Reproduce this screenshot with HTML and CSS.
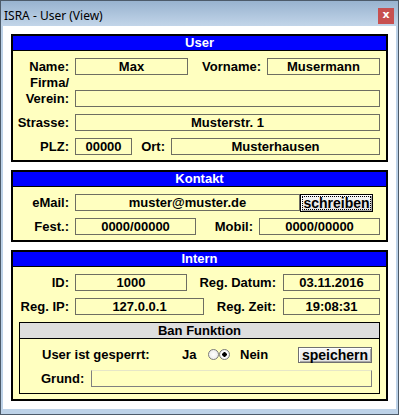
FILE: index.html
```html
<!DOCTYPE html>
<html>
<head>
<title>ISRA - User (View)</title>
<link rel="stylesheet" href="styles.css">
</head>
<body>
<div class="window">
<div class="titlebar">
	<span class="title">ISRA - User (View)</span>
	<span class="close">x</span>
</div>
<div class="client">

<div class="section">
	<div class="head">User</div>
	<div class="body">
		<div class="row">
			<label class="lbl">Name:</label>
			<input class="field w-name" type="text" value="Max" readonly>
			<label class="lbl2 w-vorname">Vorname:</label>
			<input class="field grow" type="text" value="Musermann" readonly>
		</div>
		<div class="row tall">
			<label class="lbl">Firma/<br>Verein:</label>
			<input class="field grow" type="text" value="" readonly>
		</div>
		<div class="row">
			<label class="lbl">Strasse:</label>
			<input class="field grow" type="text" value="Musterstr. 1" readonly>
		</div>
		<div class="row">
			<label class="lbl">PLZ:</label>
			<input class="field w-plz" type="text" value="00000" readonly>
			<label class="lbl2 w-ort">Ort:</label>
			<input class="field grow" type="text" value="Musterhausen" readonly>
		</div>
	</div>
</div>

<div class="section">
	<div class="head">Kontakt</div>
	<div class="body">
		<div class="row">
			<label class="lbl">eMail:</label>
			<input class="field w-mail" type="text" value="muster@muster.de" readonly>
			<button class="btn default w-write"><span>schreiben</span></button>
		</div>
		<div class="row">
			<label class="lbl">Fest.:</label>
			<input class="field w-fest" type="text" value="0000/00000" readonly>
			<label class="lbl2 w-mobil">Mobil:</label>
			<input class="field grow" type="text" value="0000/00000" readonly>
		</div>
	</div>
</div>

<div class="section">
	<div class="head">Intern</div>
	<div class="body">
		<div class="row">
			<label class="lbl">ID:</label>
			<input class="field w-id" type="text" value="1000" readonly>
			<label class="lbl2 w-datum">Reg. Datum:</label>
			<input class="field grow" type="text" value="03.11.2016" readonly>
		</div>
		<div class="row">
			<label class="lbl">Reg. IP:</label>
			<input class="field w-ip" type="text" value="127.0.0.1" readonly>
			<label class="lbl2 w-zeit">Reg. Zeit:</label>
			<input class="field grow" type="text" value="19:08:31" readonly>
		</div>

		<div class="ban">
			<div class="banhead">Ban Funktion</div>
			<div class="banbody">
				<div class="row">
					<span class="banlbl">User ist gesperrt:</span>
					<span class="ja">Ja</span>
					<input class="radio" type="radio" name="ban">
					<input class="radio" type="radio" name="ban" checked>
					<span class="nein">Nein</span>
					<button class="btn save">speichern</button>
				</div>
				<div class="row">
					<span class="grundlbl">Grund:</span>
					<input class="grund" type="text" value="">
				</div>
			</div>
		</div>
	</div>
</div>

</div>
</div>
</body>
</html>
```
FILE: styles.css
```css
body{
	margin: 0;
	font-family: "Liberation Sans", Arial, sans-serif;
}
.window{
	width: 399px;
	height: 415px;
	box-sizing: border-box;
	border: 1px solid #4d5b6a;
	background: #bdd2e8;
	padding: 0 2px 5px 2px;
	display: flex;
	flex-direction: column;
}
.titlebar{
	height: 25px;
	margin: 0 -2px;
	padding: 0 4px 0 3px;
	background: linear-gradient(#98b3cf, #c2d5e9);
	display: flex;
	align-items: center;
	justify-content: space-between;
}
.title{
	font-family: "Noto Sans", "Open Sans", sans-serif;
	font-size: 12px;
	color: #000;
	margin-top: 3px;
}
.close{
	width: 16px;
	height: 16px;
	margin-top: 4px;
	background: #c75050;
	color: #fff;
	font-family: "DejaVu Sans", sans-serif;
	font-weight: bold;
	font-size: 11px;
	line-height: 14px;
	text-align: center;
}
.client{
	flex: 1;
	background: #fff;
	padding: 8px 8px 0 8px;
}
.section{
	border: 2px solid #000;
	background: #ffffc0;
	margin-bottom: 8px;
}
.head{
	height: 14px;
	line-height: 14px;
	background: #0000ff;
	color: #fff;
	font-size: 13px;
	font-weight: bold;
	text-align: center;
	border-bottom: 1px solid #000;
}
.body{
	padding: 7px 6px 5px 0;
}
.row{
	display: flex;
	align-items: center;
	height: 17px;
	margin-bottom: 7px;
}
.row:last-child{
	margin-bottom: 0;
}
.row.tall{
	height: 32px;
	align-items: flex-end;
	margin-top: -7px;
}
.lbl, .lbl2, .banlbl, .ja, .nein, .grundlbl{
	font-size: 13px;
	font-weight: bold;
	color: #000;
}
.lbl{
	width: 56px;
	margin-right: 6px;
	text-align: right;
	line-height: 16px;
	flex-shrink: 0;
}
.lbl2{
	text-align: right;
	margin-right: 6px;
	flex-shrink: 0;
}
.field{
	height: 17px;
	box-sizing: border-box;
	border: 1px solid #6e6e62;
	background: #ffffc0;
	font-family: "Liberation Sans", Arial, sans-serif;
	font-size: 13px;
	font-weight: bold;
	color: #000;
	text-align: center;
	padding: 0;
	margin: 0;
	min-width: 0;
	outline: none;
}
.grow{ flex: 1; }
.w-name{ width: 113px; }
.w-vorname{ width: 73px; }
.w-plz{ width: 57px; }
.w-ort{ width: 33px; }
.w-mail{ width: 225px; }
.w-write{ width: 73px; margin-left: 7px; }
.w-fest{ width: 121px; }
.w-mobil{ width: 57px; }
.w-id{ width: 112px; }
.w-datum{ width: 89px; margin-right: 7px; }
.w-ip{ width: 129px; }
.w-zeit{ width: 72px; margin-right: 7px; }

.btn{
	box-sizing: border-box;
	height: 17px;
	padding: 0;
	margin: 0;
	border: 1px solid #707070;
	background: linear-gradient(#f6f6f6, #e3e3e3);
	box-shadow: inset 1px 1px #fff, inset -1px -1px #a8a8a8;
	font-family: "Liberation Sans", Arial, sans-serif;
	font-size: 14px;
	font-weight: bold;
	color: #000;
	line-height: 14px;
}
.btn.default{
	height: 18px;
	border-color: #000;
	padding: 1px;
}
.btn.default span{
	display: block;
	border: 1px dotted #000;
	line-height: 12px;
}
.ban{
	margin: 7px 0 0 6px;
	border: 1px solid #000;
}
.banhead{
	height: 15px;
	line-height: 15px;
	background: #dedede;
	border-bottom: 1px solid #000;
	font-size: 13px;
	font-weight: bold;
	text-align: center;
	color: #000;
}
.banbody{
	padding: 7px 7px 6px 0;
}
.banlbl{
	width: 140px;
	padding-left: 22px;
	flex-shrink: 0;
}
.ja{
	width: 26px;
}
.radio{
	appearance: none;
	-webkit-appearance: none;
	width: 11px;
	height: 11px;
	box-sizing: border-box;
	margin: 0;
	border: 1px solid #7a7a7a;
	border-radius: 50%;
	background: radial-gradient(#fff, #e6e6e6);
}
.radio:checked{
	background: radial-gradient(circle, #000 0 2px, #fff 2.5px, #e6e6e6);
}
.nein{
	margin-left: 10px;
}
.save{
	width: 74px;
	height: 16px;
	margin-left: auto;
}
.grundlbl{
	padding-left: 21px;
	width: 42px;
	margin-right: 8px;
	flex-shrink: 0;
}
.grund{
	flex: 1;
	height: 17px;
	box-sizing: border-box;
	margin: 0;
	padding: 0;
	border: 1px solid #808080;
	border-top-color: #e6e6c8;
	background: #ffffc0;
	outline: none;
}
```
